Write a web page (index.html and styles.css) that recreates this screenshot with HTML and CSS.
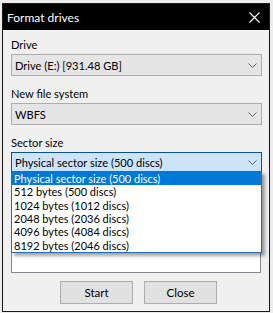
FILE: index.html
```html
<!DOCTYPE html>
<html>
<head>
<meta charset="utf-8">
<link rel="stylesheet" href="styles.css">
</head>
<body>
<div class="window">
  <div class="titlebar">
    <span class="title">Format drives</span>
    <svg class="close" width="11" height="11" viewBox="0 0 11 11"><path d="M0.5 0.5 L10.5 10.5 M10.5 0.5 L0.5 10.5" stroke="#fff" stroke-width="1.1" fill="none"/></svg>
  </div>
  <div class="content">
    <div class="label">Drive</div>
    <div class="combo"><span>Drive (E:) [931.48 GB]</span><svg class="chev" width="9" height="5" viewBox="0 0 9 5"><path d="M0.5 0.5 L4.5 4.5 L8.5 0.5" stroke="#606060" fill="none"/></svg></div>
    <div class="label gap">New file system</div>
    <div class="combo"><span>WBFS</span><svg class="chev" width="9" height="5" viewBox="0 0 9 5"><path d="M0.5 0.5 L4.5 4.5 L8.5 0.5" stroke="#606060" fill="none"/></svg></div>
    <div class="label gap">Sector size</div>
    <div class="combo-wrap">
      <div class="combo active"><span>Physical sector size (500 discs)</span><svg class="chev" width="9" height="5" viewBox="0 0 9 5"><path d="M0.5 0.5 L4.5 4.5 L8.5 0.5" stroke="#606060" fill="none"/></svg></div>
      <ul class="droplist">
        <li class="sel">Physical sector size (500 discs)</li>
        <li>512 bytes (500 discs)</li>
        <li>1024 bytes (1012 discs)</li>
        <li>2048 bytes (2036 discs)</li>
        <li>4096 bytes (4084 discs)</li>
        <li>8192 bytes (2046 discs)</li>
      </ul>
    </div>
    <div class="listbox"></div>
    <div class="buttons">
      <button class="btn">Start</button>
      <button class="btn">Close</button>
    </div>
  </div>
</div>
</body>
</html>
```
FILE: styles.css
```css
html, body {
  margin: 0;
  padding: 0;
  background: #ececec;
  font-family: "Segoe UI", Lato, "Liberation Sans", sans-serif;
  font-size: 11.1px;
  color: #000;
}
.window {
  box-sizing: border-box;
  margin: 3px 0 0 2px;
  width: 268px;
  height: 309px;
  border: 1px solid #1a1a1a;
  background: #f0f0f0;
}
.titlebar {
  height: 26px;
  background: #000;
  color: #fff;
  display: flex;
  align-items: center;
  justify-content: space-between;
  padding: 0 9px 0 4px;
}
.title {
  font-size: 12px;
}
.close {
  display: block;
}
.content {
  padding: 7px 6px 0 8px;
}
.label {
  height: 16px;
  line-height: 16px;
  margin-bottom: 1px;
}
.label.gap {
  margin-top: 10px;
}
.combo {
  box-sizing: border-box;
  height: 22px;
  width: 251px;
  border: 1px solid #adadad;
  background: #e5e5e5;
  display: flex;
  align-items: center;
  justify-content: space-between;
  padding: 0 4px 0 3px;
}
.combo.active {
  background: #cce4f7;
  border-color: #005499;
  height: 20px;
}
.combo-wrap {
  position: relative;
}
.droplist {
  position: absolute;
  left: 0;
  top: 19px;
  width: 251px;
  box-sizing: border-box;
  margin: 0;
  padding: 0;
  list-style: none;
  background: #fff;
  border: 1px solid #1e6fb8;
  box-shadow: 3px 3px 3px rgba(0, 0, 0, 0.35);
  z-index: 2;
}
.droplist li {
  height: 13.34px;
  line-height: 13.34px;
  padding-left: 2px;
  white-space: nowrap;
  font-size: 11px;
}
.droplist li.sel {
  background: #0078d7;
  color: #fff;
}
.listbox {
  box-sizing: border-box;
  margin-top: 10px;
  width: 250px;
  height: 91px;
  border: 1px solid #828790;
  background: #fff;
}
.buttons {
  display: flex;
  gap: 11px;
  margin-top: 8px;
  padding-left: 49px;
}
.btn {
  box-sizing: border-box;
  width: 73px;
  height: 23px;
  border: 1px solid #adadad;
  background: #e1e1e1;
  font-family: inherit;
  font-size: 11.5px;
  color: #000;
  padding: 0;
}
```
